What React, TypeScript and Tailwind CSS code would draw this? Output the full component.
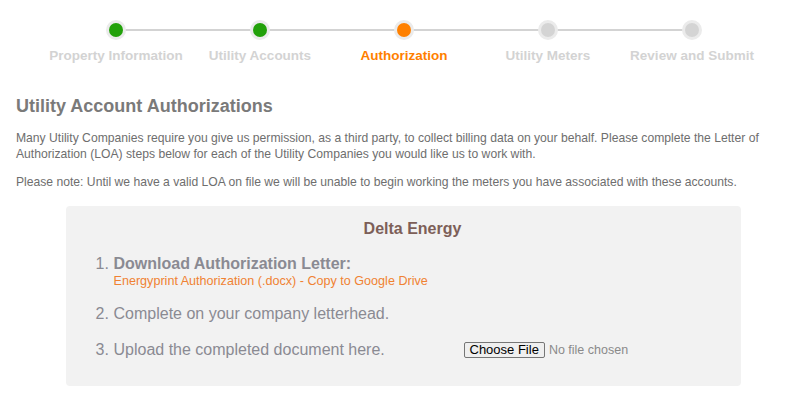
const steps = [
  { label: "Property Information", state: "done" },
  { label: "Utility Accounts", state: "done" },
  { label: "Authorization", state: "active" },
  { label: "Utility Meters", state: "todo" },
  { label: "Review and Submit", state: "todo" },
];

const dotColor: Record<string, string> = {
  done: "bg-[#22a10a]",
  active: "bg-[#ff8000]",
  todo: "bg-[#d4d4d4]",
};

const Stepper = () => (
  <div className="flex justify-center pt-[20px] pl-[2px]">
    <div className="flex w-[720px]">
      {steps.map((s, i) => (
        <div key={s.label} className="flex w-[144px] flex-col items-center">
          <div className="relative flex h-[20px] w-full items-center justify-center">
            {i > 0 && <div className="absolute left-0 right-1/2 top-[9px] h-[2px] bg-[#d3d3d3]" />}
            {i < steps.length - 1 && (
              <div className="absolute left-1/2 right-0 top-[9px] h-[2px] bg-[#d3d3d3]" />
            )}
            <div className="relative flex h-[20px] w-[20px] items-center justify-center rounded-full bg-[#ebebeb]">
              <div className={`h-[14px] w-[14px] rounded-full ${dotColor[s.state]}`} />
            </div>
          </div>
          <div
            className={`mt-[8px] text-[13.5px] font-bold leading-[16px] ${
              s.state === "active" ? "text-[#ff7f00]" : "text-[#d3d3d3]"
            }`}
          >
            {s.label}
          </div>
        </div>
      ))}
    </div>
  </div>
);

export default function App() {
  return (
    <div className="min-h-screen bg-white font-['Liberation_Sans',Arial,sans-serif]">
      <Stepper />

      <div className="px-[16px]">
        <h1 className="mt-[32px] text-[18px] font-bold leading-[20px] text-[#7a7a7a]">
          Utility Account Authorizations
        </h1>
        <p className="mt-[14px] text-[12.15px] leading-[16px] text-[#6e6e6e]">
          Many Utility Companies require you give us permission, as a third party, to collect billing data on your behalf. Please complete the Letter of Authorization (LOA) steps below for each of the Utility Companies you would like us to work with.
        </p>
        <p className="mt-[12px] text-[12.15px] leading-[16px] text-[#6e6e6e]">
          Please note: Until we have a valid LOA on file we will be unable to begin working the meters you have associated with these accounts.
        </p>

        <div className="mx-auto mt-[16px] h-[180px] w-[675px] rounded-[4px] bg-[#f2f2f2] pl-[28px] pt-[13px]">
          <div className="mr-[9px] text-center text-[16px] font-bold leading-[20px] text-[#7d5f58]">
            Delta Energy
          </div>
          <ol className="mt-[15px] pl-[2px] text-[16px] leading-[20px] text-[#8a8a92]">
            <li className="flex">
              <span className="w-[18px]">1.</span>
              <div>
                <div className="font-bold">Download Authorization Letter:</div>
                <div className="text-[12.6px] leading-[14px] text-[#f08232]">
                  Energyprint Authorization (.docx) - Copy to Google Drive
                </div>
              </div>
            </li>
            <li className="mt-[16px] flex">
              <span className="w-[18px]">2.</span>
              <span>Complete on your company letterhead.</span>
            </li>
            <li className="mt-[16px] flex items-center">
              <span className="w-[18px]">3.</span>
              <span className="w-[350px]">Upload the completed document here.</span>
              <label className="flex items-center text-[13px]">
                <span className="rounded-[2px] border border-[#767676] bg-[#efefef] px-[5px] leading-[14px] text-black">
                  Choose File
                </span>
                <span className="ml-[4px] text-[12.5px] text-[#8a8a8a]">No file chosen</span>
              </label>
            </li>
          </ol>
        </div>
      </div>
    </div>
  );
}
